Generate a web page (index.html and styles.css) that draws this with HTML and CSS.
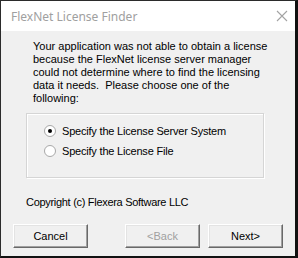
FILE: index.html
```html
<!DOCTYPE html>
<html lang="en">
<head>
    <meta charset="UTF-8">
    <title>FlexNet License Finder</title>
    <link rel="stylesheet" href="styles.css">
</head>
<body>
    <div class="window">
        <div class="titlebar">
            <span class="title">FlexNet License Finder</span>
            <svg class="close" width="12" height="12" viewBox="0 0 12 12">
                <path d="M1 1 L11 11 M11 1 L1 11" stroke="#a3a3a3" stroke-width="1.1" fill="none"/>
            </svg>
        </div>
        <div class="content">
            <p class="message">
                Your application was not able to obtain a license<br>
                because the FlexNet license server manager<br>
                could not determine where to find the licensing<br>
                data it needs.&nbsp; Please choose one of the<br>
                following:
            </p>
            <div class="group">
                <label class="option"><span class="radio checked"></span>Specify the License Server System</label>
                <label class="option"><span class="radio"></span>Specify the License File</label>
            </div>
            <p class="copyright">Copyright (c) Flexera Software LLC</p>
            <div class="buttons">
                <button class="btn">Cancel</button>
                <button class="btn back" disabled>&lt;Back</button>
                <button class="btn next">Next&gt;</button>
            </div>
        </div>
    </div>
</body>
</html>
```
FILE: styles.css
```css
body {
    margin: 0;
    padding: 0;
    background-color: #1e1e1e;
}

.window {
    width: 298px;
    height: 258px;
    box-sizing: border-box;
    border-left: 1px solid #2b2b2b;
    border-top: 1px solid #2b2b2b;
    border-right: 3px solid #111;
    border-bottom: 2px solid #111;
    background-color: #f0f0f0;
    font-family: "Liberation Sans", Arial, sans-serif;
    font-size: 11px;
    color: #000;
}

.titlebar {
    height: 30px;
    background-color: #fff;
    display: flex;
    align-items: center;
    justify-content: space-between;
    padding: 0 7px 0 10px;
}

.title {
    font-family: "Noto Sans", sans-serif;
    font-size: 12px;
    color: #a0a0a0;
}

.close {
    display: block;
}

.content {
    padding-top: 9px;
}

.message {
    margin: 0 0 8px 32px;
    line-height: 13px;
}

.group {
    margin-left: 25px;
    width: 238px;
    height: 65px;
    box-sizing: border-box;
    border: 1px solid #d5d5d5;
    box-shadow: inset 1px 1px 0 #fff, 1px 1px 0 #fff;
    padding-top: 7px;
}

.option {
    display: flex;
    align-items: center;
    height: 20px;
    padding-left: 17px;
    letter-spacing: -0.2px;
}

.radio {
    width: 12px;
    height: 12px;
    box-sizing: border-box;
    border: 1px solid #a8a8a8;
    border-radius: 50%;
    background-color: #fff;
    margin-right: 6px;
    display: flex;
    align-items: center;
    justify-content: center;
}

.radio.checked::after {
    content: "";
    width: 4px;
    height: 4px;
    border-radius: 50%;
    background-color: #000;
}

.copyright {
    margin: 18px 0 0 25px;
    line-height: 13px;
    letter-spacing: -0.3px;
}

.buttons {
    display: flex;
    margin: 15px 0 0 12px;
}

.btn {
    width: 75px;
    height: 24px;
    box-sizing: border-box;
    font-family: "Liberation Sans", Arial, sans-serif;
    font-size: 11px;
    color: #000;
    background-color: #f0f0f0;
    border-top: 1px solid #fff;
    border-left: 1px solid #fff;
    border-right: 1px solid #696969;
    border-bottom: 1px solid #696969;
    box-shadow: inset -1px -1px 0 #a0a0a0, inset 1px 1px 0 #e3e3e3;
    padding: 0;
}

.back {
    margin-left: 37px;
    color: #a0a0a0;
}

.next {
    margin-left: 8px;
}
```
